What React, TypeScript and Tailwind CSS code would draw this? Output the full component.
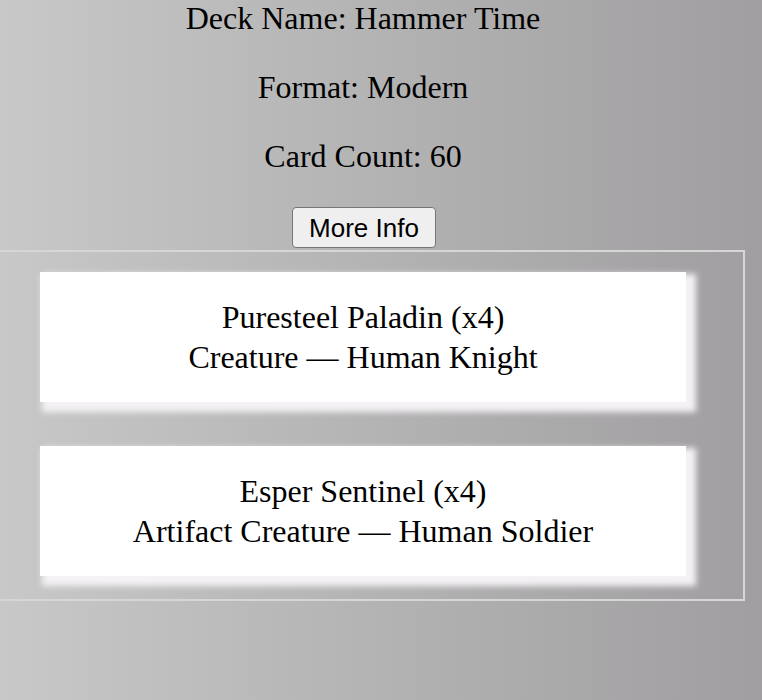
import React from "react";

const cards = [
  { name: "Puresteel Paladin", qty: 4, type: "Creature — Human Knight" },
  { name: "Esper Sentinel", qty: 4, type: "Artifact Creature — Human Soldier" },
];

export default function App() {
  return (
    <div className="min-h-screen overflow-hidden bg-gradient-to-r from-[#c8c8c8] to-[#a09ea0] font-['Liberation_Serif',serif] text-black">
      <div className="flex w-[726px] flex-col items-center text-center text-[32px] leading-[37px]">
        <p>Deck Name: Hammer Time</p>
        <p className="mt-[32px]">Format: Modern</p>
        <p className="mt-[32px]">Card Count: 60</p>
        <button className="mt-[32px] ml-[2px] h-[41px] w-[144px] rounded-[4px] border border-[#767676] bg-[#efefef] font-['Liberation_Sans',sans-serif] text-[26px] leading-none">
          More Info
        </button>

        {/* lista de cartas */}
        <div className="mx-[-19px] mt-[2px] flex w-[764px] flex-col gap-[44px] border-2 border-[#d6d6d6] px-[57px] pt-[20px] pb-[23px]">
          {cards.map((c) => (
            <div
              key={c.name}
              className="flex h-[130px] flex-col justify-center bg-white leading-[40px] shadow-[6px_6px_6px_4px_#f4f2f4]"
            >
              <span>
                {c.name} (x{c.qty})
              </span>
              <span>{c.type}</span>
            </div>
          ))}
        </div>
      </div>
    </div>
  );
}
